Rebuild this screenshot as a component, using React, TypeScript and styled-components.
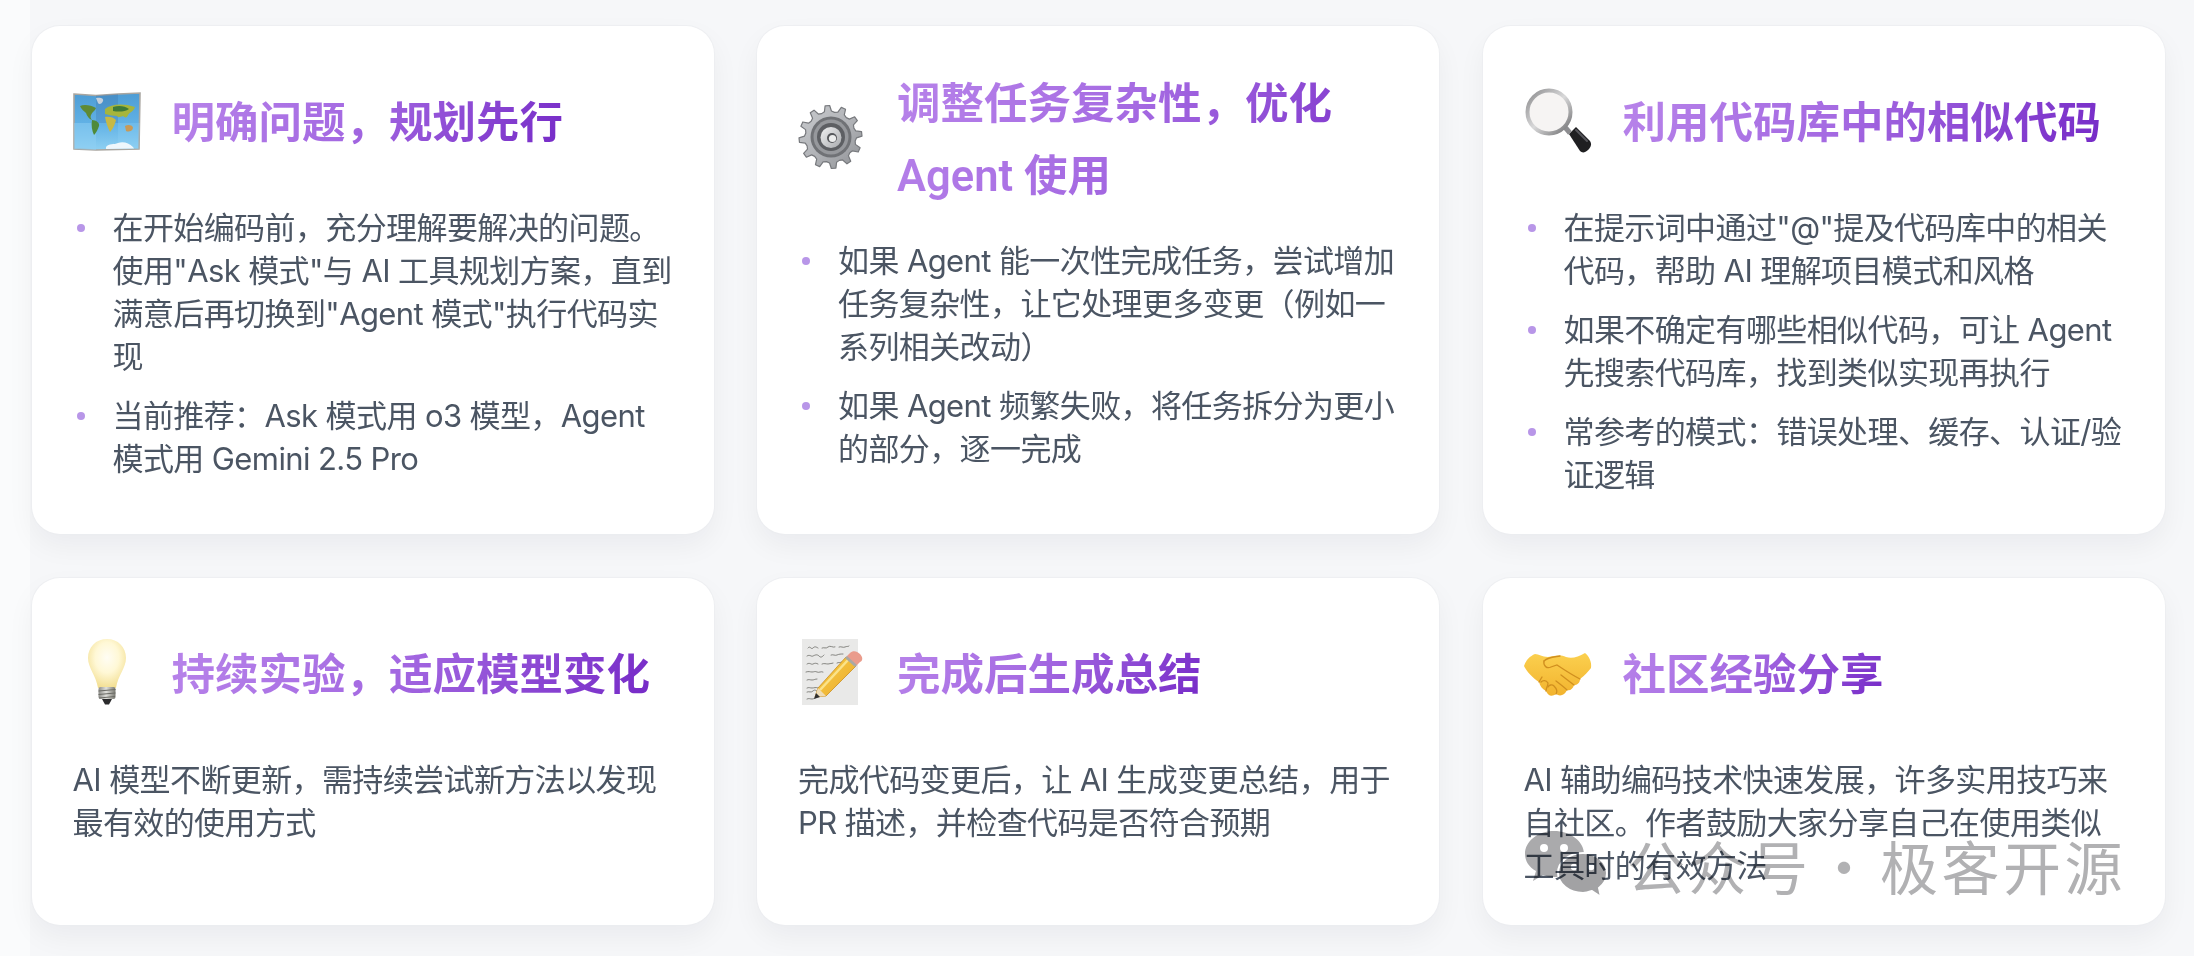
import React from "react";
import styled, { createGlobalStyle } from "styled-components";

const GlobalStyle = createGlobalStyle`
    html, body {
        margin: 0;
        padding: 0;
        background: #fafbfc;
        overflow: hidden;
    }
    * {
        box-sizing: border-box;
    }
`;

const Page = styled.div`
    position: relative;
    width: 2194px;
    height: 956px;
    overflow: hidden;
    padding-left: 30px;
    font-family: "Inter", "Noto Sans CJK SC", sans-serif;
`;

const Board = styled.div`
    display: grid;
    grid-template-columns: repeat(3, 682px);
    column-gap: 43.5px;
    row-gap: 44px;
    align-content: start;
    height: 956px;
    padding: 26px 0 0 1.5px;
    background: #f6f7f9;
`;

const Card = styled.section`
    background: #ffffff;
    border-radius: 28px;
    padding: 40px 41px 38px;
    box-shadow: 0 0 0 1px rgba(235, 236, 240, 0.7), 0 12px 28px rgba(20, 24, 40, 0.05);
`;

const Header = styled.header`
    display: flex;
    align-items: center;
    min-height: 110px;
    margin-bottom: 30px;
`;

const IconBox = styled.div`
    flex: 0 0 99px;
    display: flex;
    align-items: center;
    svg {
        display: block;
        width: 68px;
        height: 68px;
    }
`;

const Title = styled.h3`
    margin: 0 0 -3px;
    padding-top: 3px;
    font-family: "Roboto", "Noto Sans CJK SC", sans-serif;
    font-size: 43.5px;
    font-weight: 600;
    line-height: 71.5px;
    background: linear-gradient(120deg, #b884ea 0%, #a56ae2 45%, #7428c6 100%);
    -webkit-background-clip: text;
    background-clip: text;
    color: transparent;
`;

const BulletList = styled.ul`
    margin: 0;
    padding: 0;
    list-style: none;
`;

const BulletItem = styled.li`
    display: flex;
    font-size: 31px;
    letter-spacing: -0.6px;
    line-height: 43px;
    color: #4b5563;
    & + & {
        margin-top: 16px;
    }
`;

const Marker = styled.span`
    flex: 0 0 40px;
    height: 43px;
    display: flex;
    align-items: center;
    padding-left: 4px;
    &::before {
        content: "";
        width: 8px;
        height: 8px;
        border-radius: 50%;
        background: #b896e8;
    }
`;

const Paragraph = styled.p`
    margin: 0;
    font-size: 31px;
    letter-spacing: -0.6px;
    line-height: 43px;
    color: #4b5563;
`;

const Watermark = styled.div`
    position: absolute;
    top: 831px;
    left: 1525px;
    display: flex;
    align-items: center;
    gap: 20px;
    color: #b1b1b3;
    mix-blend-mode: multiply;
    pointer-events: none;
    svg {
        display: block;
        width: 82px;
        height: 68px;
    }
`;

const WatermarkText = styled.span`
    font-family: "Noto Sans CJK SC", sans-serif;
    font-size: 58px;
    line-height: 68px;
    letter-spacing: 3.5px;
    word-spacing: -13px;
    white-space: pre;
`;

const gearPath = (() => {
    const teeth = 12;
    const points: string[] = [];
    for (let i = 0; i < teeth; i++) {
        const a = (i / teeth) * Math.PI * 2 - 0.1;
        const step = (Math.PI * 2) / teeth;
        const pairs: [number, number][] = [
            [25, a - step * 0.5],
            [26, a - step * 0.26],
            [31.5, a - step * 0.14],
            [31.5, a + step * 0.14],
            [26, a + step * 0.26],
        ];
        pairs.forEach(([r, t]) => {
            points.push(`${(32.5 + r * Math.cos(t)).toFixed(2)} ${(33 + r * Math.sin(t)).toFixed(2)}`);
        });
    }
    return `M${points.join("L")}Z`;
})();

function MapIcon() {
    return (
        <svg viewBox="0 0 68 68">
            <defs>
                <linearGradient id="mapSea" x1="0" y1="0" x2="0" y2="1">
                    <stop offset="0" stopColor="#4d9cd4" />
                    <stop offset="0.55" stopColor="#62b2e6" />
                    <stop offset="1" stopColor="#8ed0f2" />
                </linearGradient>
            </defs>
            <path d="M1 7 L23 8.5 L45 7 L67 6 L66 62 L45 62.5 L23 63 L1 62 Z" fill="url(#mapSea)" stroke="#a9a6a0" strokeWidth="1.6" />
            <path d="M23 8.5 L45 7 L45 36 L23 36 Z" fill="#3a6fa8" opacity="0.3" />
            <path d="M1 36 L23 36 L23 63 L1 62 Z" fill="#8fd0f4" opacity="0.5" />
            <path d="M45 36 L67 36 L66 62 L45 62 Z" fill="#8fd0f4" opacity="0.3" />
            <path d="M23 11 C27 10 31 11 30 14 C29 17 26 18 25 16 Z" fill="#c6d0dc" />
            <path d="M7 19 C11 17 18 18 23 21 C22 24 19 25 18 28 C17 30 18 32 19 33 C16 32 14 29 13 26 C11 24 8 22 7 19 Z" fill="#5f8a34" />
            <path d="M19 33 C23 33 27 36 26 39 C25 42 23 46 21 48 C19 44 18 38 19 33 Z" fill="#4f8a3a" />
            <path d="M32 22 C38 17 50 16 62 20 C61 24 57 25 55 28 C54 31 52 31 50 29 C47 30 45 31 44 29 C40 29 36 28 32 27 Z" fill="#a6b53c" />
            <path d="M40 20 C46 18 52 19 56 22 C52 25 45 25 40 24 Z" fill="#3f7a38" />
            <path d="M32 30 C36 29 41 30 43 33 C42 37 40 42 37 45 C35 41 33 36 32 30 Z" fill="#c7b944" />
            <path d="M52 39 C55 37 60 38 60 41 C59 45 55 45 53 44 Z" fill="#c79a58" />
            <path d="M33 60 C36 56 41 58 45 56 C50 54 56 56 60 60 L61 61.5 L33 62 Z" fill="#eef7fc" />
        </svg>
    );
}

function GearIcon() {
    return (
        <svg viewBox="0 0 68 68">
            <defs>
                <linearGradient id="gearBody" x1="0" y1="0" x2="1" y2="1">
                    <stop offset="0" stopColor="#c9cbce" />
                    <stop offset="0.55" stopColor="#b0b2b6" />
                    <stop offset="1" stopColor="#8e9094" />
                </linearGradient>
                <linearGradient id="gearHub" x1="0" y1="0" x2="1" y2="1">
                    <stop offset="0" stopColor="#f0f1f2" />
                    <stop offset="1" stopColor="#a9abae" />
                </linearGradient>
            </defs>
            <path d={gearPath} fill="url(#gearBody)" stroke="#77797d" strokeWidth="1.2" strokeLinejoin="round" />
            <circle cx="33" cy="33" r="20.5" fill="#707276" />
            <circle cx="33" cy="33" r="17.5" fill="#96989c" />
            <circle cx="33" cy="33" r="14" fill="#5d5f63" />
            <circle cx="33" cy="33.5" r="10.5" fill="url(#gearHub)" />
            <circle cx="34" cy="34" r="5" fill="#56585c" />
            <circle cx="34.5" cy="34.5" r="3.6" fill="#eceded" />
        </svg>
    );
}

function SearchIcon() {
    return (
        <svg viewBox="0 0 68 68">
            <defs>
                <linearGradient id="lensRing" x1="0" y1="0" x2="1" y2="1">
                    <stop offset="0" stopColor="#8b8b8d" />
                    <stop offset="0.5" stopColor="#d9d9da" />
                    <stop offset="1" stopColor="#6d6d6f" />
                </linearGradient>
            </defs>
            <path d="M45 47 L52 40 L66 54 C68 57 67 60 64 63 C61 66 58 66 56 64 Z" fill="#1f1f21" />
            <path d="M52 43 L63 54" stroke="#55555a" strokeWidth="2" strokeLinecap="round" />
            <path d="M40 39 L46 46" stroke="#8d8d90" strokeWidth="5" />
            <circle cx="25" cy="25" r="21.5" fill="#f6f4f3" stroke="url(#lensRing)" strokeWidth="4" />
        </svg>
    );
}

function BulbIcon() {
    return (
        <svg viewBox="0 0 68 68">
            <defs>
                <radialGradient id="bulbGlass" cx="0.5" cy="0.38" r="0.62">
                    <stop offset="0" stopColor="#fffdf4" />
                    <stop offset="0.5" stopColor="#fff8d6" />
                    <stop offset="1" stopColor="#f3df93" />
                </radialGradient>
                <linearGradient id="bulbBase" x1="0" y1="0" x2="1" y2="0">
                    <stop offset="0" stopColor="#8c8c88" />
                    <stop offset="0.45" stopColor="#e0e0dc" />
                    <stop offset="1" stopColor="#77776f" />
                </linearGradient>
            </defs>
            <path d="M34 0 C45 0 53 8 53 19 C53 29 45 36 43 49 L25 49 C23 36 15 29 15 19 C15 8 23 0 34 0 Z" fill="url(#bulbGlass)" />
            <rect x="25.5" y="48" width="17" height="12" rx="2" fill="url(#bulbBase)" />
            <path d="M25.5 52 L42.5 50.5 M25.5 55.5 L42.5 54 M26 59 L42 57.5" stroke="#6b6b66" strokeWidth="1" />
            <path d="M29 60 L39 60 L36 65.5 L32 65.5 Z" fill="#2b2b2d" />
        </svg>
    );
}

function NoteIcon() {
    return (
        <svg viewBox="0 0 68 68">
            <defs>
                <linearGradient id="pencilBody" x1="0" y1="0" x2="1" y2="1">
                    <stop offset="0" stopColor="#f6d04a" />
                    <stop offset="1" stopColor="#eda92a" />
                </linearGradient>
            </defs>
            <rect x="4" y="0" width="56" height="66" fill="#e9e9e8" />
            <g fill="none" stroke="#5a5a54" strokeWidth="0.7" strokeLinecap="round">
                <path d="M10 9 c2 -3 3 2 5 0 s3 -1 5 0 M24 9 c2 -1 4 1 6 -1 s5 1 7 0 M41 8 c2 -1 4 1 6 0 s3 0 4 -1" />
                <path d="M9 17 c3 -2 4 1 6 0 s4 -2 6 0 s3 1 5 -1 M33 16 c2 -1 4 1 6 0 s4 -1 6 -1" />
                <path d="M9 25 c3 -2 4 1 6 0 s3 -1 5 0 M24 25 c2 -1 4 0 6 0 s4 -1 5 -1 M39 24 c2 -1 3 0 5 -1" />
                <path d="M8 33 c3 -1 4 0 6 0 s3 -1 5 0 s4 -1 6 0" />
                <path d="M9 41 c2 -1 3 0 5 0 s3 -1 5 -1" />
                <path d="M9 49 c2 -1 3 0 5 0 s4 -1 6 0 s3 -1 4 -1" />
                <path d="M9 53 c2 -1 4 1 6 -1 s3 0 4 0" />
                <path d="M9 60 c2 -1 3 0 5 0 s2 -1 3 -1" />
            </g>
            <path d="M17 58 L20 49 L48 18 L58 27 L28 57 Z" fill="url(#pencilBody)" stroke="#c98f22" strokeWidth="0.8" />
            <path d="M22 51 L50 21" stroke="#fbe38a" strokeWidth="2.5" />
            <path d="M17 58 L20 49 L28 57 Z" fill="#efdcb5" />
            <path d="M16 60 L18 54 L22 58 Z" fill="#2f2f2f" />
            <path d="M48 18 L52 14 C55 11 59 12 62 15 C65 18 65 22 62 23 L58 27 Z" fill="#ea9c8c" />
            <path d="M48 18 L58 27" stroke="#a9a9a4" strokeWidth="3" />
        </svg>
    );
}

function HandshakeIcon() {
    return (
        <svg viewBox="0 0 68 68">
            <defs>
                <linearGradient id="handFill" x1="0" y1="0" x2="0" y2="1">
                    <stop offset="0" stopColor="#fbd04f" />
                    <stop offset="1" stopColor="#f2b32e" />
                </linearGradient>
            </defs>
            <path d="M0 27 C2 21 6 17 11 15 C15 15 18 18 24 18 C30 17 36 15 42 18 C48 20 54 18 61 14 C65 17 68 23 67 29 C64 33 61 36 56 40 C56 44 53 46 50 46 C49 50 46 52 43 51 C41 56 36 58 32 55 C28 58 24 57 22 52 C18 50 16 47 15 43 C9 39 3 33 0 27 Z" fill="url(#handFill)" />
            <g fill="none" stroke="#d08f1f" strokeWidth="1.3" strokeLinecap="round">
                <path d="M20 22 C19 27 23 30 27 28 L33 26 C39 30 48 36 56 40" />
                <path d="M20 22 C24 18 30 18 36 17" />
                <path d="M50 46 C46 43 41 39 37 36" />
                <path d="M43 51 C40 48 36 45 32 42" />
                <path d="M32 55 C34 52 33 50 30 47 C28 45 25 46 24 48" />
                <path d="M22 52 C22 49 24 47 24 44 C22 41 19 41 17 43" />
                <path d="M15 43 L18 38" />
            </g>
        </svg>
    );
}

function WechatIcon() {
    return (
        <svg viewBox="0 0 82 68">
            <path d="M29 0 C45 0 59 10 59 23 C59 36 45 46 29 46 C25 46 21 45 18 44 L8 50 L11 40 C4 36 0 30 0 23 C0 10 13 0 29 0 Z" fill="#aaaaac" />
            <circle cx="19" cy="17" r="4" fill="#ffffff" />
            <circle cx="39" cy="17" r="4" fill="#ffffff" />
            <path d="M58 22 C71 22 82 31 82 42 C82 48 79 53 74 57 L76 66 L67 60 C64 61 61 62 58 62 C44 62 33 53 33 42 C33 31 44 22 58 22 Z" fill="#a2a2a4" stroke="#ffffff" strokeWidth="2" />
            <circle cx="49" cy="36" r="3.2" fill="#ffffff" />
            <circle cx="66" cy="36" r="3.2" fill="#ffffff" />
        </svg>
    );
}

interface Tip {
    id: string;
    icon: React.ReactNode;
    title: string;
    points?: string[];
    text?: string;
}

const tips: Tip[] = [
    {
        id: "plan",
        icon: <MapIcon />,
        title: "明确问题，规划先行",
        points: [
            "在开始编码前，充分理解要解决的问题。使用\"Ask 模式\"与 AI 工具规划方案，直到满意后再切换到\"Agent 模式\"执行代码实现",
            "当前推荐：Ask 模式用 o3 模型，Agent 模式用 Gemini 2.5 Pro",
        ],
    },
    {
        id: "complexity",
        icon: <GearIcon />,
        title: "调整任务复杂性，优化 Agent 使用",
        points: [
            "如果 Agent 能一次性完成任务，尝试增加任务复杂性，让它处理更多变更（例如一系列相关改动）",
            "如果 Agent 频繁失败，将任务拆分为更小的部分，逐一完成",
        ],
    },
    {
        id: "similar",
        icon: <SearchIcon />,
        title: "利用代码库中的相似代码",
        points: [
            "在提示词中通过\"@\"提及代码库中的相关代码，帮助 AI 理解项目模式和风格",
            "如果不确定有哪些相似代码，可让 Agent 先搜索代码库，找到类似实现再执行",
            "常参考的模式：错误处理、缓存、认证/验证逻辑",
        ],
    },
    {
        id: "experiment",
        icon: <BulbIcon />,
        title: "持续实验，适应模型变化",
        text: "AI 模型不断更新，需持续尝试新方法以发现最有效的使用方式",
    },
    {
        id: "summary",
        icon: <NoteIcon />,
        title: "完成后生成总结",
        text: "完成代码变更后，让 AI 生成变更总结，用于 PR 描述，并检查代码是否符合预期",
    },
    {
        id: "community",
        icon: <HandshakeIcon />,
        title: "社区经验分享",
        text: "AI 辅助编码技术快速发展，许多实用技巧来自社区。作者鼓励大家分享自己在使用类似工具时的有效方法",
    },
];

function App() {
    return (
        <Page>
            <GlobalStyle />
            <Board>
                {tips.map(({ id, icon, title, points, text }) => (
                    <Card key={id}>
                        <Header>
                            <IconBox>{icon}</IconBox>
                            <Title>{title}</Title>
                        </Header>
                        {points ? (
                            <BulletList>
                                {points.map((point) => (
                                    <BulletItem key={point}>
                                        <Marker />
                                        <span>{point}</span>
                                    </BulletItem>
                                ))}
                            </BulletList>
                        ) : (
                            <Paragraph>{text}</Paragraph>
                        )}
                    </Card>
                ))}
            </Board>
            <Watermark>
                <WechatIcon />
                <WatermarkText>公众号 · 极客开源</WatermarkText>
            </Watermark>
        </Page>
    );
}

export default App;
